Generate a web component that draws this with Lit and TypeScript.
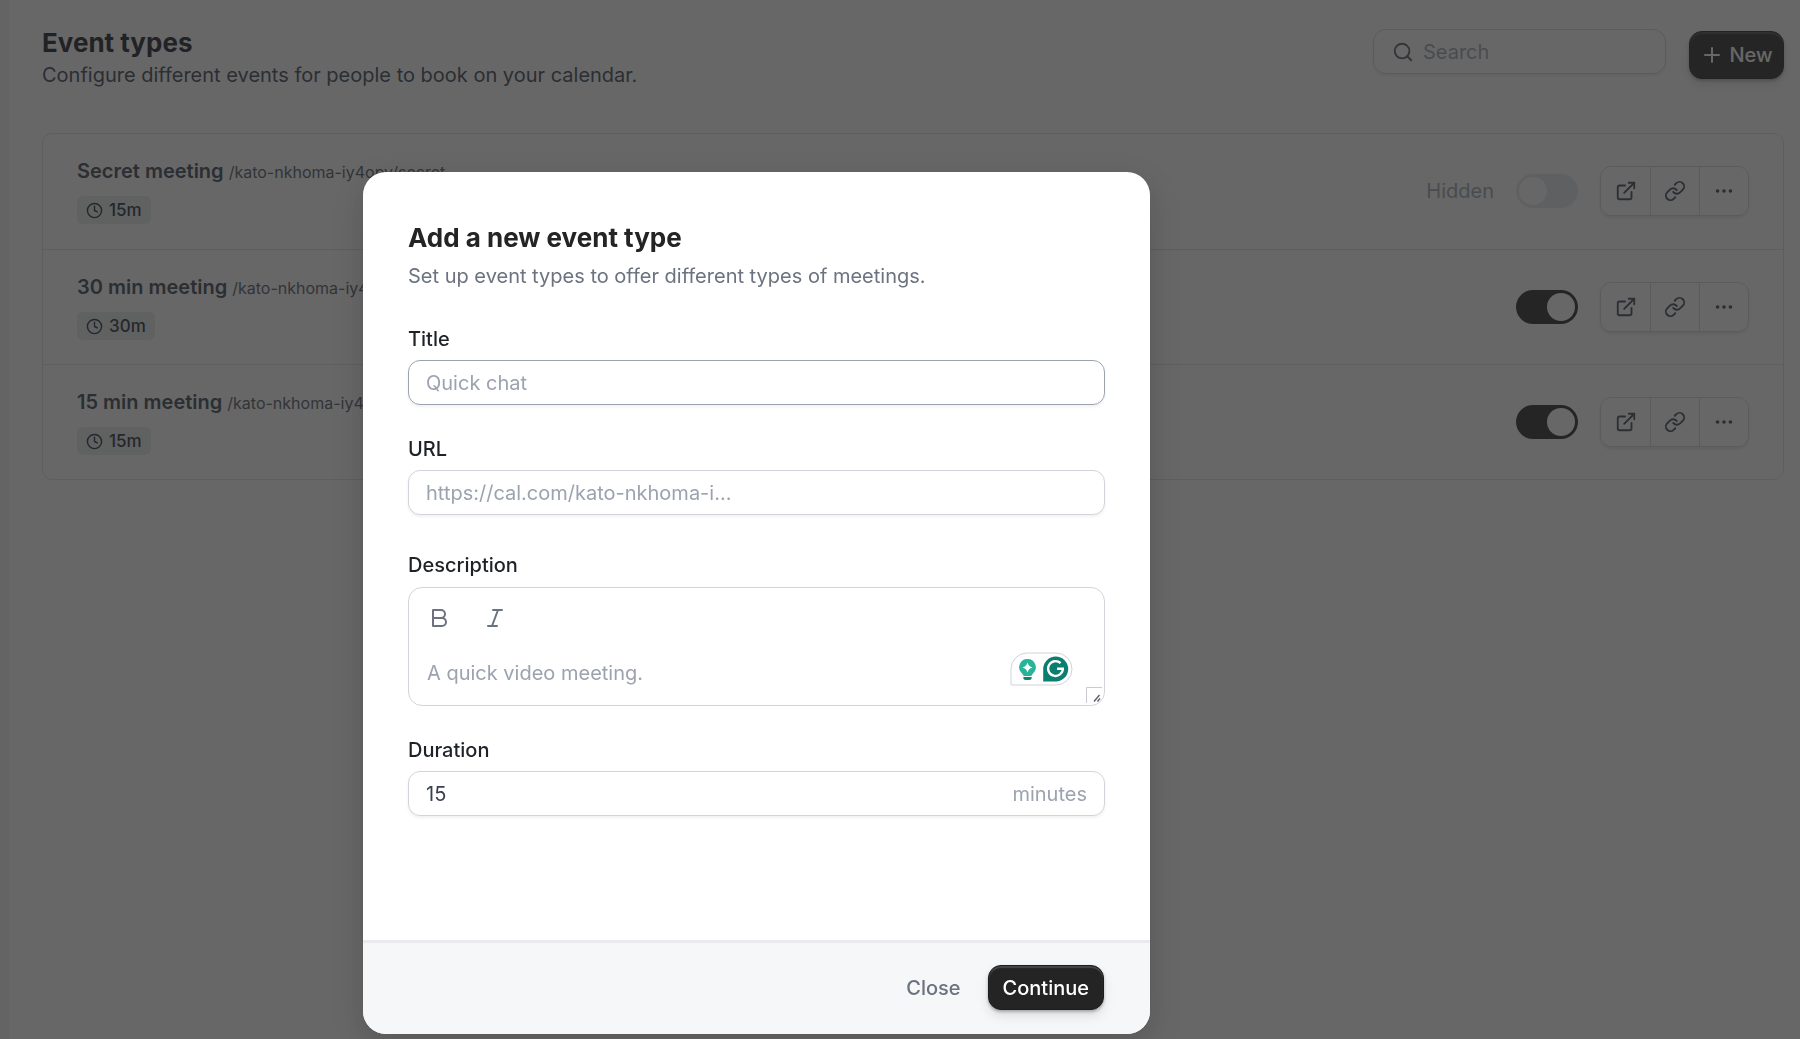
import { LitElement, html, svg, css, nothing } from "lit";
import { customElement, property, state } from "lit/decorators.js";
import { classMap } from "lit/directives/class-map.js";

interface EventType {
  title: string;
  slug: string;
  minutes: number;
  visible: boolean;
}

const stroke = (body: unknown, cls = "icon") => html`
  <svg class=${cls} viewBox="0 0 24 24" fill="none" stroke="currentColor" stroke-width="2"
    stroke-linecap="round" stroke-linejoin="round" aria-hidden="true">${body}</svg>`;

const icons = {
  search: svg`<circle cx="11" cy="11" r="8"/><path d="m21 21-4.35-4.35"/>`,
  plus: svg`<path d="M5 12h14M12 5v14"/>`,
  clock: svg`<circle cx="12" cy="12" r="10"/><path d="M12 6v6l4 2"/>`,
  external: svg`<path d="M18 13v6a2 2 0 0 1-2 2H5a2 2 0 0 1-2-2V8a2 2 0 0 1 2-2h6"/><path d="M15 3h6v6"/><path d="M10 14 21 3"/>`,
  link: svg`<path d="M10 13a5 5 0 0 0 7.54.54l3-3a5 5 0 0 0-7.07-7.07l-1.72 1.71"/><path d="M14 11a5 5 0 0 0-7.54-.54l-3 3a5 5 0 0 0 7.07 7.07l1.71-1.71"/>`,
  more: svg`<circle cx="12" cy="12" r="1"/><circle cx="19" cy="12" r="1"/><circle cx="5" cy="12" r="1"/>`,
  bold: svg`<path d="M6 4h8a4 4 0 0 1 0 8H6z"/><path d="M6 12h9a4 4 0 0 1 0 8H6z"/>`,
  italic: svg`<path d="M19 4h-9M14 20H5M15 4 9 20"/>`,
};

const base = css`
  *, *::before, *::after { box-sizing: border-box; }
  button, input, textarea { font: inherit; color: inherit; margin: 0; }
  button { cursor: pointer; }
  h1, h2, p, ul { margin: 0; padding: 0; }
  .icon { display: block; width: 22px; height: 22px; flex: none; }
  .primary {
    display: flex; align-items: center; justify-content: center;
    border: 1px solid #1c1c1c; border-radius: 13px; color: #fff; background: #242424;
    font-weight: 500;
    box-shadow: inset 0 2px 1px rgba(255, 255, 255, 0.16), 0 2px 3px rgba(0, 0, 0, 0.25), 0 6px 12px rgba(0, 0, 0, 0.1);
  }
`;

@customElement("event-row")
export class EventRow extends LitElement {
  @property({ attribute: false }) item!: EventType;

  static styles = [base, css`
    :host {
      box-sizing: border-box; display: flex; align-items: center; justify-content: space-between;
      height: 115px; padding: 0 34px;
    }
    .title { display: flex; align-items: baseline; gap: 5px; line-height: 24px; }
    .name { font-size: 20px; font-weight: 600; color: #374151; }
    .slug { font-size: 16px; color: #4b5563; }
    .pill {
      display: flex; width: fit-content; align-items: center; gap: 6px; height: 28px; margin-top: 12px; padding: 0 9px;
      border-radius: 6px; background: #e8e9eb; color: #1f2937; font-size: 17px; font-weight: 500;
    }
    .pill .icon { width: 17px; height: 17px; }
    .controls { display: flex; align-items: center; gap: 22px; padding-bottom: 2px; }
    .hidden { color: #9ca3af; font-size: 20px; }
    .switch {
      appearance: none; display: flex; align-items: center; width: 62px; height: 34px; padding: 3px;
      border-radius: 17px; background: #e5e7eb; cursor: pointer;
    }
    .switch::before { content: ""; width: 28px; height: 28px; border-radius: 50%; background: #fff; }
    .switch:checked { justify-content: flex-end; background: #242424; }
    .group {
      display: flex; height: 50px; border: 1px solid #d1d5db; border-radius: 11px; overflow: hidden;
      box-shadow: 0 2px 3px rgba(0, 0, 0, 0.1);
    }
    .group button {
      display: flex; align-items: center; justify-content: center; width: 49px; padding: 0;
      border: 0; background: #fff; color: #374151;
    }
    .group button + button { border-left: 1px solid #d1d5db; }
  `];

  render() {
    const { title, slug, minutes, visible } = this.item;
    return html`
      <div>
        <div class="title"><span class="name">${title}</span><span class="slug">${slug}</span></div>
        <span class="pill">${stroke(icons.clock)}${minutes}m</span>
      </div>
      <div class="controls">
        ${visible ? nothing : html`<span class="hidden">Hidden</span>`}
        <input class="switch" type="checkbox" role="switch" aria-label="Show ${title}" .checked=${visible} />
        <div class="group">
          <button type="button" aria-label="Preview">${stroke(icons.external)}</button>
          <button type="button" aria-label="Copy link">${stroke(icons.link)}</button>
          <button type="button" aria-label="More options">${stroke(icons.more)}</button>
        </div>
      </div>`;
  }
}

@customElement("event-dialog")
export class EventDialog extends LitElement {
  @state() private active = "title";

  static styles = [base, css`
    :host { display: block; width: 787px; max-width: 100%; }
    .dialog {
      display: flex; flex-direction: column; border-radius: 23px; overflow: hidden;
      background: #fff; box-shadow: 0 10px 32px rgba(0, 0, 0, 0.16);
    }
    .body { padding: 49px 45px 124px; }
    h2 { font-size: 26px; font-weight: 700; line-height: 34px; color: #242424; }
    .sub { margin-top: 7px; line-height: 28px; color: #6b7280; }
    .field { display: flex; flex-direction: column; gap: 7px; margin-top: 30px; }
    .lead { margin-top: 35px; }
    .wide { gap: 8px; margin-top: 36px; }
    .field label { line-height: 28px; font-weight: 500; color: #1f2328; }
    .box {
      display: flex; align-items: center; height: 45px; padding: 0 17px;
      border: 1px solid #d1d5db; border-radius: 12px; background: #fff;
      box-shadow: 0 2px 3px rgba(0, 0, 0, 0.06);
    }
    .box.active { border-color: #9ca3af; }
    .box input, .editor textarea {
      flex: 1; min-width: 0; width: 100%; padding: 0; border: 0; outline: 0; background: none; color: #374151;
    }
    ::placeholder { color: #9ca3af; opacity: 1; }
    .addon { color: #9ca3af; }
    .editor {
      position: relative; padding: 14px 18px 18px; border: 1px solid #d1d5db; border-radius: 14px;
    }
    .tools { display: flex; gap: 32px; }
    .tools button { padding: 0; border: 0; background: none; color: #6b7280; height: 32px; display: flex; align-items: center; }
    .tools .icon { width: 24px; height: 24px; }
    .editor textarea { display: block; height: 28px; margin-top: 25px; resize: none; line-height: 28px; overflow: hidden; }
    .helper { position: absolute; right: 31px; bottom: 19px; width: 63px; height: 34px; }
    .grip { position: absolute; right: 2px; bottom: 1px; width: 16px; height: 17px; }
    footer {
      display: flex; align-items: center; justify-content: flex-end; gap: 27px;
      height: 94px; padding: 0 46px 2px; border-top: 3px solid #e9eaee; background: #f6f7f9;
    }
    .close { padding: 0; border: 0; background: none; color: #6b7280; font-weight: 500; }
    footer .primary { height: 45px; padding: 0 14px; }
  `];

  render() {
    const box = (name: string) => classMap({ box: true, active: this.active === name });
    return html`
      <form class="dialog" role="dialog" aria-labelledby="heading" @submit=${(e: Event) => e.preventDefault()}>
        <div class="body">
          <h2 id="heading">Add a new event type</h2>
          <p class="sub">Set up event types to offer different types of meetings.</p>

          <div class="field lead">
            <label for="title">Title</label>
            <div class=${box("title")}>
              <input id="title" placeholder="Quick chat" @focus=${() => (this.active = "title")} />
            </div>
          </div>

          <div class="field">
            <label for="url">URL</label>
            <div class=${box("url")}>
              <span class="addon">https://cal.com/kato-nkhoma-i...</span>
              <input id="url" @focus=${() => (this.active = "url")} />
            </div>
          </div>

          <div class="field wide">
            <label for="description">Description</label>
            <div class="editor">
              <div class="tools">
                <button type="button" aria-label="Bold">${stroke(icons.bold)}</button>
                <button type="button" aria-label="Italic">${stroke(icons.italic)}</button>
              </div>
              <textarea id="description" rows="1" placeholder="A quick video meeting."></textarea>
              <svg class="helper" viewBox="0 0 63 34" aria-hidden="true">
                <path d="M1 33V17A16 16 0 0 1 17 1h29a16 16 0 0 1 0 32z" fill="#fff" stroke="#d1d3da"/>
                <path d="M17.500 7a8.300 8.300 0 0 0-5.500 14.500l1.800 2.500h7.400l1.800-2.500A8.300 8.300 0 0 0 17.500 7z" fill="#27b49b"/>
                <path d="M17.500 10.500q1 4 5 5-4 1-5 5-1-4-5-5 4-1 5-5z" fill="#fff"/>
                <path d="M13.300 25h8.400v.5a2.500 2.500 0 0 1-2.500 2.500h-3.400a2.500 2.500 0 0 1-2.500-2.500z" fill="#0f8574"/>
                <path d="M33.200 29.500V17A12.500 12.500 0 1 1 45.700 29.500z" fill="#0b7f6f"/>
                <path d="M50.600 11.200a7.400 7.400 0 1 0 2.300 5.400" fill="none" stroke="#fff" stroke-width="2.300"/>
                <path d="M47 15.500h7l-.2 2.400H47z" fill="#fff"/>
              </svg>
              <svg class="grip" viewBox="0 0 16 17" fill="none" aria-hidden="true">
                <path d="M.5 16V.5H16" stroke="#c9cbd1"/>
                <path d="m8 14.500 5.500-6.500M11.500 14.500l2.500-3" stroke="#5b606b" stroke-width="1.400"/>
              </svg>
            </div>
          </div>

          <div class="field">
            <label for="duration">Duration</label>
            <div class=${box("duration")}>
              <input id="duration" inputmode="numeric" value="15" @focus=${() => (this.active = "duration")} />
              <span class="addon">minutes</span>
            </div>
          </div>
        </div>
        <footer>
          <button class="close" type="button">Close</button>
          <button class="primary" type="submit">Continue</button>
        </footer>
      </form>`;
  }
}

@customElement("app-root")
export class AppRoot extends LitElement {
  @state() private items: EventType[] = [
    { title: "Secret meeting", slug: "/kato-nkhoma-iy4opv/secret", minutes: 15, visible: false },
    { title: "30 min meeting", slug: "/kato-nkhoma-iy4opv/30min", minutes: 30, visible: true },
    { title: "15 min meeting", slug: "/kato-nkhoma-iy4opv/15min", minutes: 15, visible: true },
  ];

  static styles = [base, css`
    :host {
      display: flex; min-height: 100vh; background: #fff;
      font-family: Inter, "Liberation Sans", sans-serif; font-size: 20px; line-height: 28px;
    }
    .rail { flex: none; width: 9px; background: #f3f4f6; }
    main { flex: 1; min-width: 0; padding: 27px 16px 40px 33px; }
    header { display: flex; justify-content: space-between; align-items: flex-start; min-height: 106px; }
    h1 { font-size: 26px; font-weight: 700; line-height: 32px; color: #111827; }
    .sub { margin-top: 2px; color: #374151; }
    .actions { display: flex; align-items: flex-start; gap: 23px; padding-top: 2px; }
    .search {
      display: flex; align-items: center; gap: 9px; width: 293px; height: 45px; padding: 0 18px;
      border: 1px solid #d1d5db; border-radius: 13px; color: #4b5563;
      box-shadow: 0 2px 3px rgba(0, 0, 0, 0.08);
    }
    .search input { flex: 1; min-width: 0; padding: 0; border: 0; outline: 0; background: none; }
    .search ::placeholder { color: #9ca3af; opacity: 1; }
    .actions .primary { height: 48px; gap: 5px; width: 95px; margin-top: 2px; padding: 0; }
    .actions .primary .icon { width: 24px; height: 24px; }
    .list { list-style: none; border: 1px solid #dcdfe4; border-radius: 10px; }
    .list li + li { border-top: 1px solid #dcdfe4; margin-bottom: -1px; }
    .overlay {
      position: fixed; inset: 0; display: flex; justify-content: center; align-items: flex-start;
      padding: 172px 287px 0 0; background: rgba(39, 39, 39, 0.7); overflow: hidden;
    }
  `];

  render() {
    return html`
      <div class="rail"></div>
      <main>
        <header>
          <div>
            <h1>Event types</h1>
            <p class="sub">Configure different events for people to book on your calendar.</p>
          </div>
          <div class="actions">
            <label class="search">${stroke(icons.search)}<input type="search" aria-label="Search" placeholder="Search" /></label>
            <button class="primary" type="button">${stroke(icons.plus)}New</button>
          </div>
        </header>
        <ul class="list">
          ${this.items.map((item) => html`<li><event-row .item=${item}></event-row></li>`)}
        </ul>
      </main>
      <div class="overlay"><event-dialog></event-dialog></div>`;
  }
}
